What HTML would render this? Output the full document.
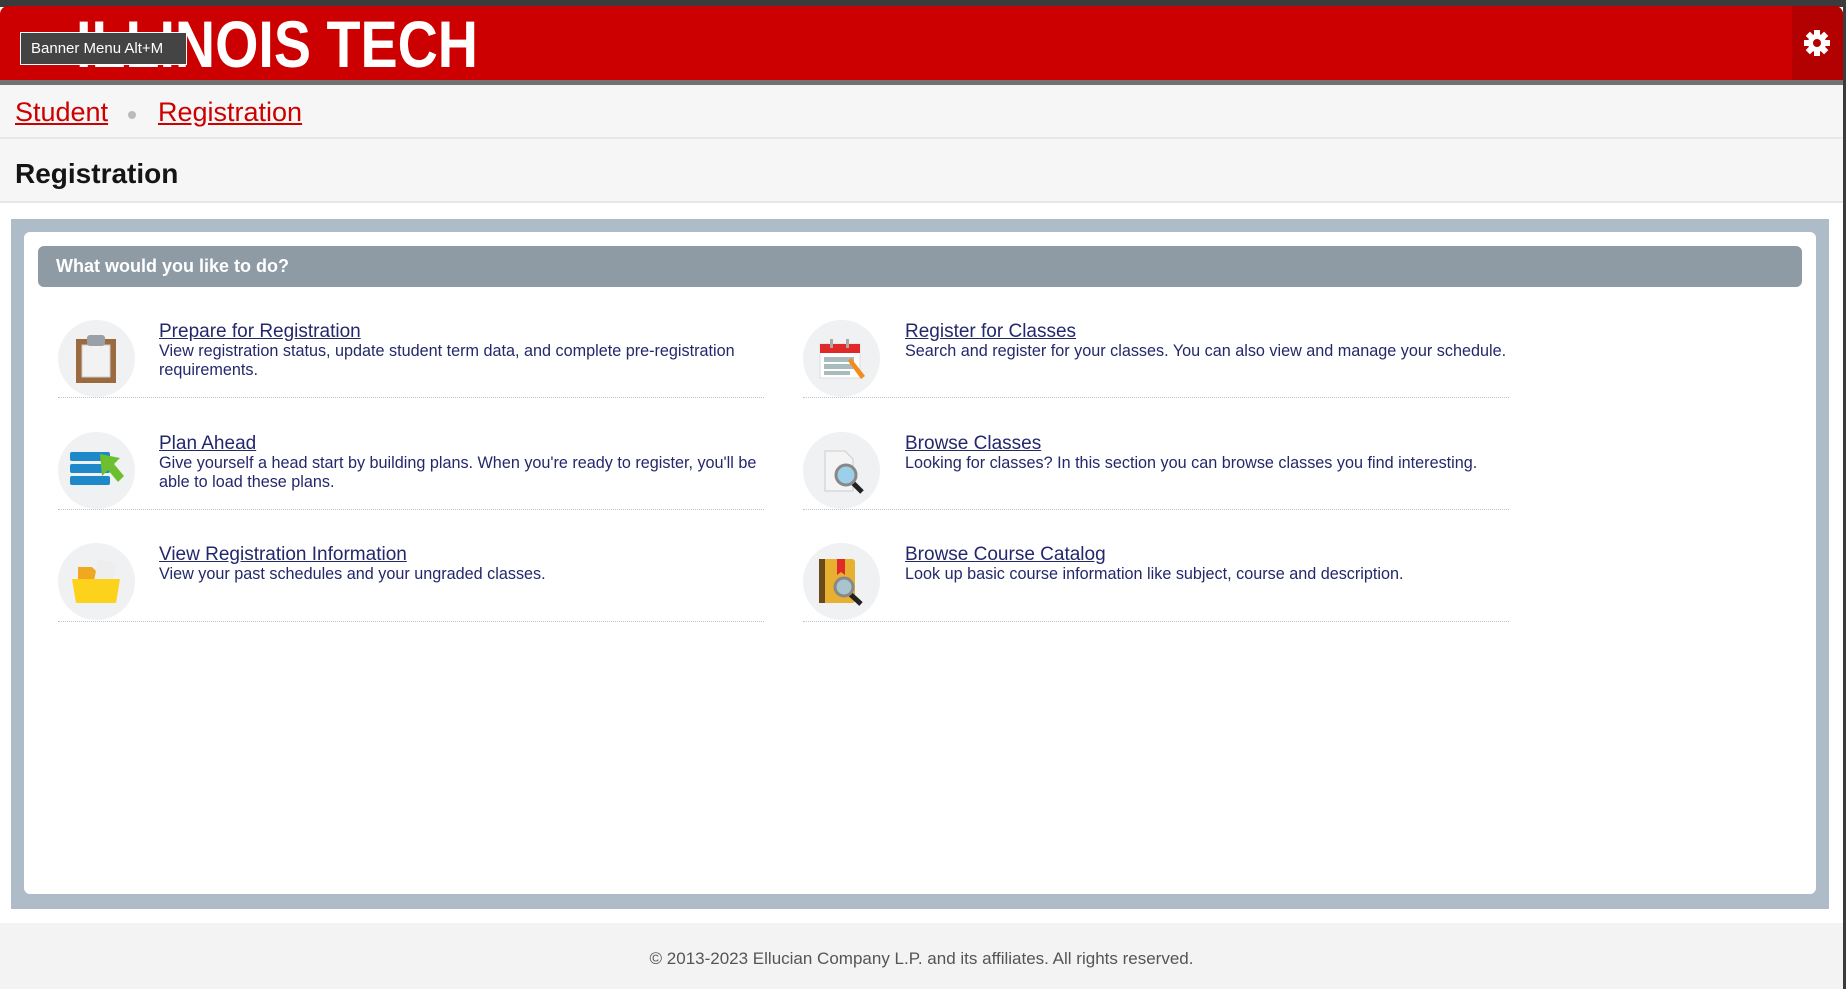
<!DOCTYPE html>
<html><head><meta charset="utf-8">
<style>
*{margin:0;padding:0;box-sizing:border-box}
body{width:1846px;height:989px;position:relative;background:#fff;font-family:"Liberation Sans",Arial,sans-serif;overflow:hidden}
.abs{position:absolute}
.circle{position:absolute;width:77px;height:77px;border-radius:50%;background:#f0f1f3}
.t{position:absolute;font-size:19px;color:#23286b;text-decoration:underline;white-space:nowrap}
.d{position:absolute;font-size:16.2px;line-height:19px;color:#23286b}
.sep{position:absolute;height:0;border-top:1px dotted #c4c4c4;width:706px}
</style></head><body>
<div class="abs" style="left:0;top:0;width:1846px;height:7px;background:#3b3b3b"></div>
<div class="abs" style="left:1843px;top:0;width:3px;height:989px;background:#3b3b3b"></div>
<div class="abs" style="left:0;top:6px;width:1843px;height:74px;background:#cc0000;border-radius:8px 8px 0 0"></div>
<div class="abs" style="left:1792px;top:6px;width:51px;height:74px;background:#b30000;border-radius:0 8px 0 0"></div>
<svg class="abs" style="left:1803px;top:29px" width="28" height="28" viewBox="0 0 28 28">
<g fill="#fff"><circle cx="14" cy="14" r="9"/>
<rect x="11" y="1" width="6" height="26"/><rect x="1" y="11" width="26" height="6"/>
<rect x="11" y="1" width="6" height="26" transform="rotate(45 14 14)"/><rect x="11" y="1" width="6" height="26" transform="rotate(-45 14 14)"/></g>
<circle cx="14" cy="14" r="4" fill="#b30000"/></svg>
<svg class="abs" style="left:74px;top:12px" width="410" height="60"><text x="2" y="55" textLength="402" lengthAdjust="spacingAndGlyphs" font-family="Liberation Sans Narrow, Liberation Sans, sans-serif" font-weight="bold" font-size="66" fill="#fff">ILLINOIS TECH</text></svg>
<div class="abs" style="left:20px;top:32px;width:167px;height:33px;background:#444;border:1px solid #fff;color:#fff;font-size:15px;line-height:31px;padding-left:10px;white-space:nowrap">Banner Menu Alt+M</div>
<div class="abs" style="left:0;top:80px;width:1843px;height:5px;background:#737373"></div>
<div class="abs" style="left:0;top:85px;width:1843px;height:117px;background:#f6f6f6"></div>
<div class="abs" style="left:0;top:137px;width:1843px;height:2px;background:#e8e8e8"></div>
<div class="abs" style="left:0;top:201px;width:1843px;height:2px;background:#e8e8e8"></div>
<div class="abs" style="left:15px;top:97px;font-size:27px;color:#cc0000;text-decoration:underline">Student</div>
<div class="abs" style="left:128px;top:111px;width:8px;height:8px;border-radius:50%;background:#bbb"></div>
<div class="abs" style="left:158px;top:97px;font-size:27px;color:#cc0000;text-decoration:underline">Registration</div>
<div class="abs" style="left:15px;top:158px;font-size:28px;font-weight:bold;color:#151515">Registration</div>
<div class="abs" style="left:11px;top:219px;width:1818px;height:690px;background:#aebbc9"></div>
<div class="abs" style="left:24px;top:232px;width:1792px;height:662px;background:#fff;border-radius:6px"></div>
<div class="abs" style="left:38px;top:246px;width:1764px;height:41px;background:#8e9ba5;border-radius:6px;color:#fff;font-weight:bold;font-size:18px;line-height:41px;padding-left:18px">What would you like to do?</div>

<div class="circle" style="left:58px;top:320px"></div>
<svg class="abs" style="left:58px;top:320px" width="77" height="77"><rect x="18" y="19" width="40" height="44" fill="#9b6a3e"/><rect x="24" y="25" width="28" height="32" fill="#f2f2f2" stroke="#ccc"/><rect x="29" y="15" width="18" height="11" rx="3" fill="#9aa0a8"/></svg>
<a class="t" style="left:159px;top:321px">Prepare for Registration</a>
<div class="d" style="left:159px;top:342px">View registration status, update student term data, and complete pre-registration<br>requirements.</div>
<div class="sep" style="left:58px;top:397px"></div>

<div class="circle" style="left:58px;top:432px"></div>
<svg class="abs" style="left:58px;top:432px" width="77" height="77"><g fill="#1e88c8"><rect x="12" y="20" width="40" height="9" rx="2"/><rect x="12" y="32" width="40" height="9" rx="2"/><rect x="12" y="44" width="40" height="9" rx="2"/></g><path d="M42 22 L62 26 L56 32 L66 44 L60 50 L50 38 L44 44 Z" fill="#6cc030"/></svg>
<a class="t" style="left:159px;top:433px">Plan Ahead</a>
<div class="d" style="left:159px;top:454px">Give yourself a head start by building plans. When you're ready to register, you'll be<br>able to load these plans.</div>
<div class="sep" style="left:58px;top:509px"></div>

<div class="circle" style="left:58px;top:543px"></div>
<svg class="abs" style="left:58px;top:543px" width="77" height="77"><path d="M20 24 h14 l4 4 h14 v10 h-32z" fill="#f0a820"/><rect x="38" y="18" width="18" height="22" fill="#eee" transform="rotate(12 47 29)"/><path d="M14 36 h48 l-4 24 h-40z" fill="#fcd21c"/></svg>
<a class="t" style="left:159px;top:544px">View Registration Information</a>
<div class="d" style="left:159px;top:565px">View your past schedules and your ungraded classes.</div>
<div class="sep" style="left:58px;top:621px"></div>

<div class="circle" style="left:803px;top:320px"></div>
<svg class="abs" style="left:803px;top:320px" width="77" height="77"><rect x="17" y="24" width="40" height="34" fill="#fff" stroke="#ddd"/><rect x="17" y="24" width="40" height="9" fill="#e02a2a"/><rect x="27" y="19" width="3" height="9" fill="#aaa"/><rect x="43" y="19" width="3" height="9" fill="#aaa"/><g fill="#a9bcbc"><rect x="21" y="37" width="30" height="5"/><rect x="21" y="44" width="30" height="5"/><rect x="21" y="51" width="26" height="4"/></g><path d="M48 38 L62 56 L58 59 L45 41 Z" fill="#f28c1c"/></svg>
<a class="t" style="left:905px;top:321px">Register for Classes</a>
<div class="d" style="left:905px;top:342px">Search and register for your classes. You can also view and manage your schedule.</div>
<div class="sep" style="left:803px;top:397px"></div>

<div class="circle" style="left:803px;top:432px"></div>
<svg class="abs" style="left:803px;top:432px" width="77" height="77"><path d="M22 19 h20 l8 8 v32 h-28z" fill="#f4f4f4" stroke="#ccc"/><line x1="49" y1="50" x2="59" y2="60" stroke="#222" stroke-width="5"/><circle cx="43" cy="43" r="10" fill="#9cd0ea" stroke="#888" stroke-width="3"/></svg>
<a class="t" style="left:905px;top:433px">Browse Classes</a>
<div class="d" style="left:905px;top:454px">Looking for classes? In this section you can browse classes you find interesting.</div>
<div class="sep" style="left:803px;top:509px"></div>

<div class="circle" style="left:803px;top:543px"></div>
<svg class="abs" style="left:803px;top:543px" width="77" height="77"><rect x="16" y="16" width="36" height="44" rx="3" fill="#e8b030"/><rect x="16" y="16" width="6" height="44" fill="#6b4a1a"/><path d="M34 16 h8 v16 l-4 -3 l-4 3z" fill="#e02a2a"/><line x1="46" y1="50" x2="58" y2="61" stroke="#222" stroke-width="5"/><circle cx="41" cy="44" r="9" fill="#a9c4cc" stroke="#888" stroke-width="3"/></svg>
<a class="t" style="left:905px;top:544px">Browse Course Catalog</a>
<div class="d" style="left:905px;top:565px">Look up basic course information like subject, course and description.</div>
<div class="sep" style="left:803px;top:621px"></div>

<div class="abs" style="left:0;top:923px;width:1843px;height:66px;background:#f3f3f3;text-align:center;font-size:17px;line-height:72px;color:#555">© 2013-2023 Ellucian Company L.P. and its affiliates. All rights reserved.</div>
</body></html>
